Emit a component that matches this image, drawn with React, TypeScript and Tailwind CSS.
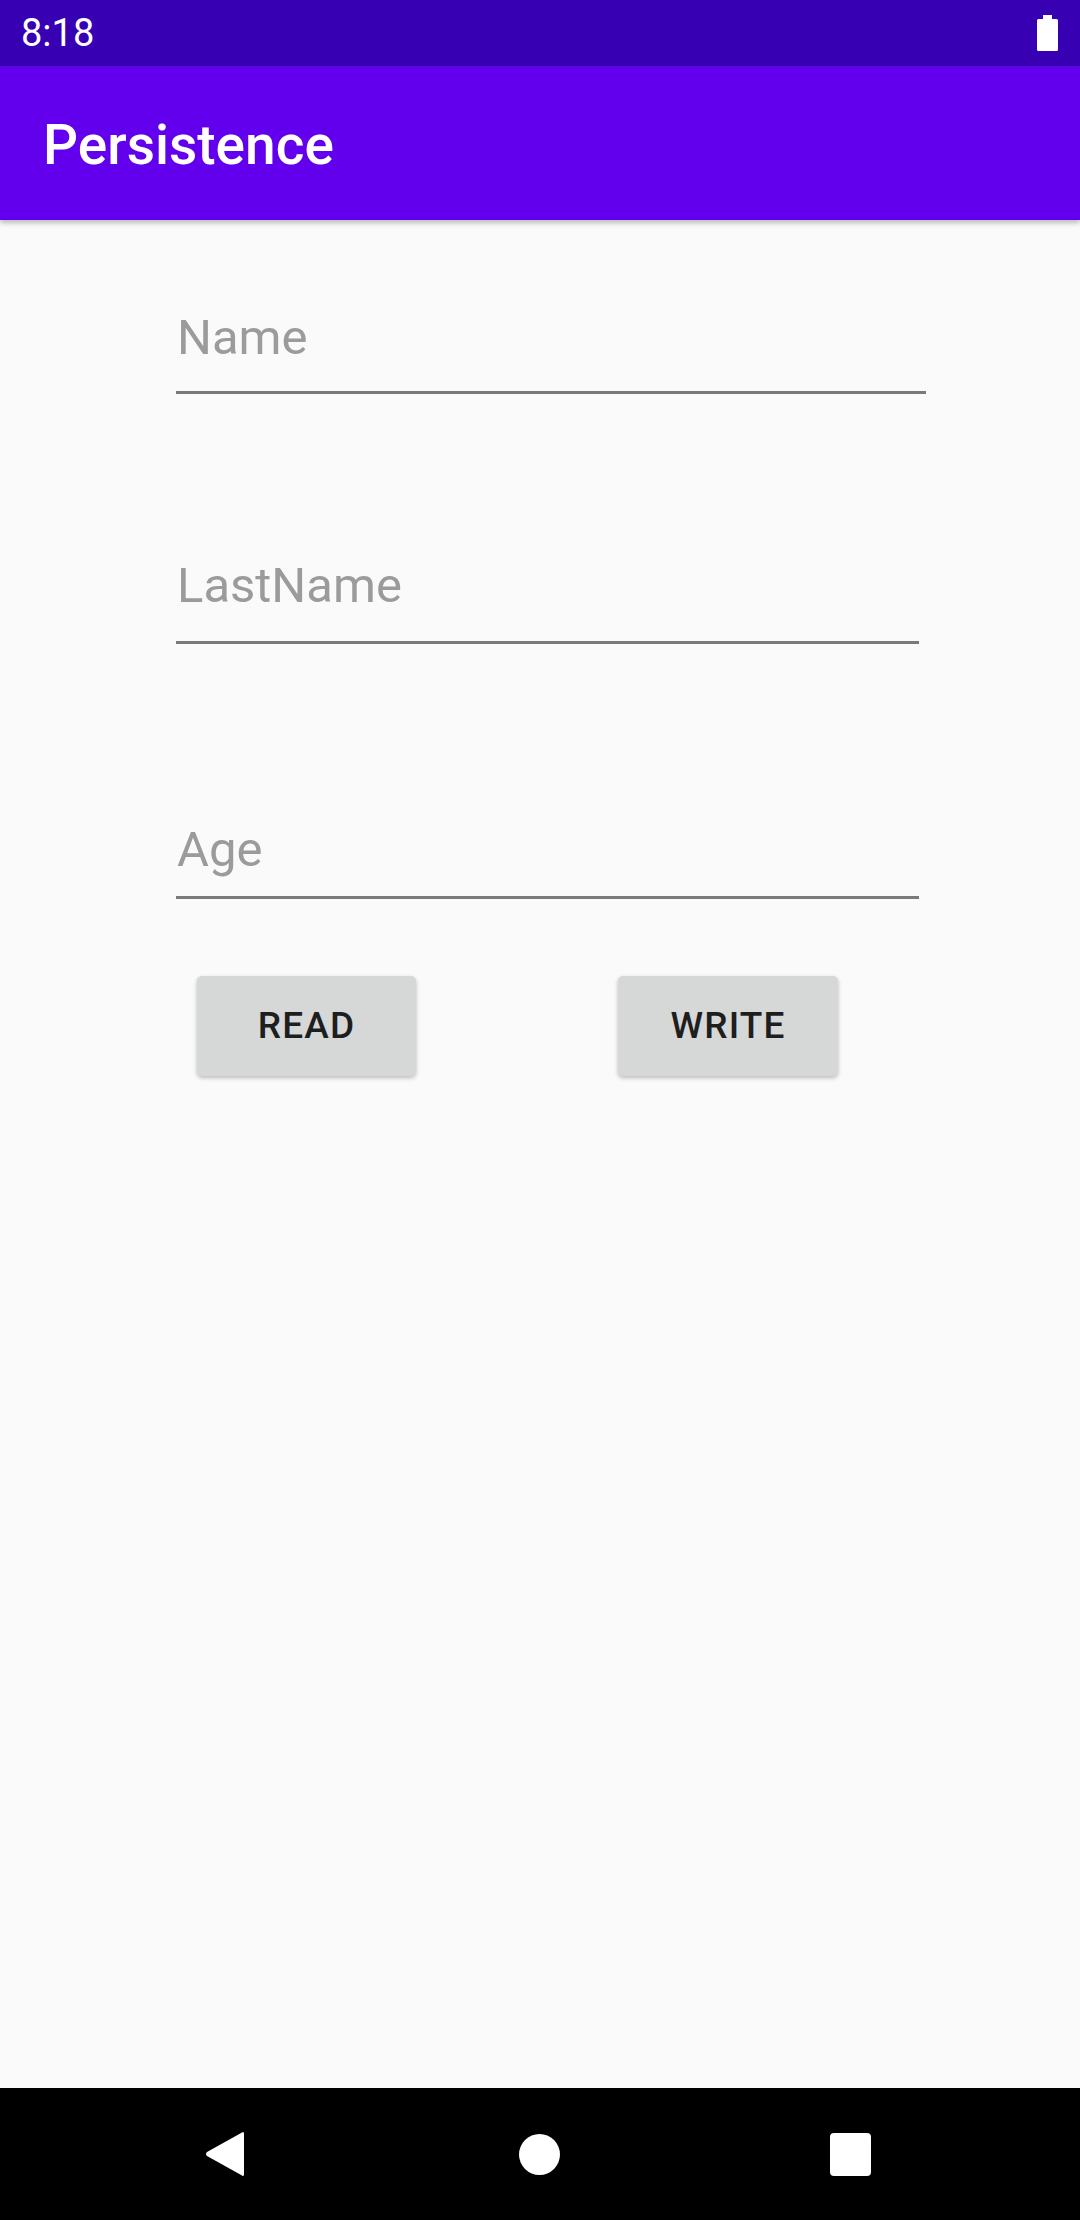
import React from "react";

const fields = [
  { label: "Name", mt: "mt-[90px]", w: "w-[750px]", pb: "pb-[25px]" },
  { label: "LastName", mt: "mt-[164px]", w: "w-[743px]", pb: "pb-[27px]" },
  { label: "Age", mt: "mt-[178px]", w: "w-[743px]", pb: "pb-[18px]" },
];

function Battery() {
  return (
    <svg width="21" height="36" viewBox="0 0 21 36" className="block">
      <path d="M6 0h9v4h4.5a1.5 1.5 0 0 1 1.5 1.5v29a1.5 1.5 0 0 1-1.5 1.5h-18A1.5 1.5 0 0 1 0 34.5v-29A1.5 1.5 0 0 1 1.5 4H6z" fill="#ffffff" />
    </svg>
  );
}

export default function App() {
  return (
    <div className="w-[1080px] h-[2220px] flex flex-col bg-[#fafafa] font-['Roboto',sans-serif] overflow-hidden">
      {/* status bar */}
      <div className="h-[66px] bg-[#3700b3] flex items-center justify-between pl-[21px] pr-[22px] shrink-0">
        <span className="text-white text-[38px] leading-none">8:18</span>
        <Battery />
      </div>

      {/* app bar */}
      <div className="h-[154px] bg-[#6200ee] flex items-center pl-[43px] shrink-0 shadow-[0_3px_5px_rgba(0,0,0,0.25)] relative z-10">
        <span className="text-white text-[55px] font-medium leading-none pt-[4px]">Persistence</span>
      </div>

      {/* content */}
      <div className="flex-1 flex flex-col pl-[176px]">
        {fields.map((f) => (
          <div key={f.label} className={`${f.mt} ${f.w} ${f.pb} border-b-[3px] border-[#7a7a7a]`}>
            <div className="text-[49px] leading-[56px] text-[#9b9b9b] pl-[1px]">{f.label}</div>
          </div>
        ))}

        <div className="flex mt-[77px] pl-[21px] gap-[202px]">
          <button className="w-[219px] h-[100px] rounded-[5px] bg-[#d6d7d7] shadow-[0_2px_4px_rgba(0,0,0,0.25)] text-[37px] font-medium tracking-[0.03em] text-[#1e1e1e]">
            READ
          </button>
          <button className="w-[220px] h-[100px] rounded-[5px] bg-[#d6d7d7] shadow-[0_2px_4px_rgba(0,0,0,0.25)] text-[37px] font-medium tracking-[0.03em] text-[#1e1e1e]">
            WRITE
          </button>
        </div>
      </div>

      {/* nav bar */}
      <div className="h-[132px] bg-black flex items-center pl-[205px] shrink-0">
        <svg width="40" height="46" viewBox="0 0 40 46">
          <path d="M37 1.5 Q39 0 39 3 V43 Q39 46 37 44.5 L2 25 Q0 23 2 21 Z" fill="#ffffff" />
        </svg>
        <div className="ml-[274px] w-[41px] h-[41px] rounded-full bg-white" />
        <div className="ml-[270px] w-[41px] h-[43px] rounded-[4px] bg-white" />
      </div>
    </div>
  );
}
